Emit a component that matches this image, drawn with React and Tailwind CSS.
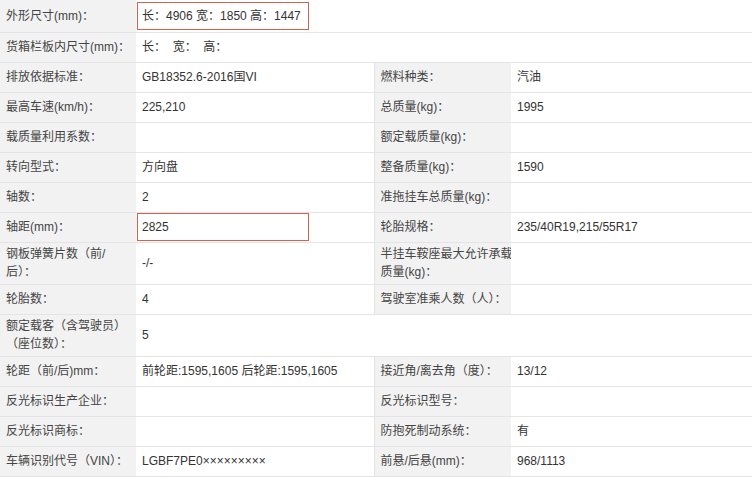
export default function App() {
  const L = "bg-[#f2f2f2] text-[#444] pl-[6px] pr-[2px] align-middle leading-[18px] whitespace-nowrap";
  const V = "bg-white text-[#333] pl-[6px] align-middle leading-[18px] whitespace-nowrap";
  const rows = [
    ["外形尺寸(mm)：", "长：4906 宽：1850 高：1447", null, null, 32, true],
    ["货箱栏板内尺寸(mm)：", "长：  宽：  高：", null, null, 30],
    ["排放依据标准：", "GB18352.6-2016国VI", "燃料种类：", "汽油", 30],
    ["最高车速(km/h)：", "225,210", "总质量(kg)：", "1995", 30],
    ["载质量利用系数：", "", "额定载质量(kg)：", "", 30],
    ["转向型式：", "方向盘", "整备质量(kg)：", "1590", 30],
    ["轴数：", "2", "准拖挂车总质量(kg)：", "", 30],
    ["轴距(mm)：", "2825", "轮胎规格：", "235/40R19,215/55R17", 30, true],
    [<>钢板弹簧片数（前/<br />后）：</>, "-/-", <>半挂车鞍座最大允许承载<br />质量(kg)：</>, "", 42],
    ["轮胎数：", "4", "驾驶室准乘人数（人）：", "", 30],
    [<>额定载客（含驾驶员）<br />（座位数）：</>, "5", null, null, 42],
    ["轮距（前/后)mm：", "前轮距:1595,1605 后轮距:1595,1605", "接近角/离去角（度）：", "13/12", 30],
    ["反光标识生产企业：", "", "反光标识型号：", "", 30],
    ["反光标识商标：", "", "防抱死制动系统：", "有", 30],
    ["车辆识别代号（VIN）：", "LGBF7PE0×××××××××", "前悬/后悬(mm)：", "968/1113", 30],
  ];
  const box = (t) => (
    <div className="w-[172px] border-[1.5px] border-[#d9604f] -ml-[5px] px-[4px] h-[28px] flex items-center whitespace-pre">{t}</div>
  );
  return (
    <div className="w-[752px] h-[478px] bg-white overflow-hidden text-[12px]" style={{ fontFamily: '"Liberation Sans", "Noto Sans CJK SC", sans-serif' }}>
      <table className="border-collapse w-[752px] table-fixed">
        <colgroup>
          <col className="w-[136px]" />
          <col className="w-[238px]" />
          <col className="w-[137px]" />
          <col className="w-[241px]" />
        </colgroup>
        <tbody>
          {rows.map((r, i) => (
            <tr key={i} style={{ height: r[4] }} className="border-b border-[#e4e4e4]">
              <td className={L + " overflow-hidden"}>{r[0]}</td>
              {r[2] === null ? (
                <td colSpan={3} className={V}>
                  {r[5] ? box(r[1]) : <span className="whitespace-pre">{r[1]}</span>}
                </td>
              ) : (
                <>
                  <td className={V + " border-r border-[#e4e4e4]"}>{r[5] ? box(r[1]) : r[1]}</td>
                  <td className={L + " overflow-hidden"}>{r[2]}</td>
                  <td className={V}>{r[3]}</td>
                </>
              )}
            </tr>
          ))}
        </tbody>
      </table>
    </div>
  );
}
